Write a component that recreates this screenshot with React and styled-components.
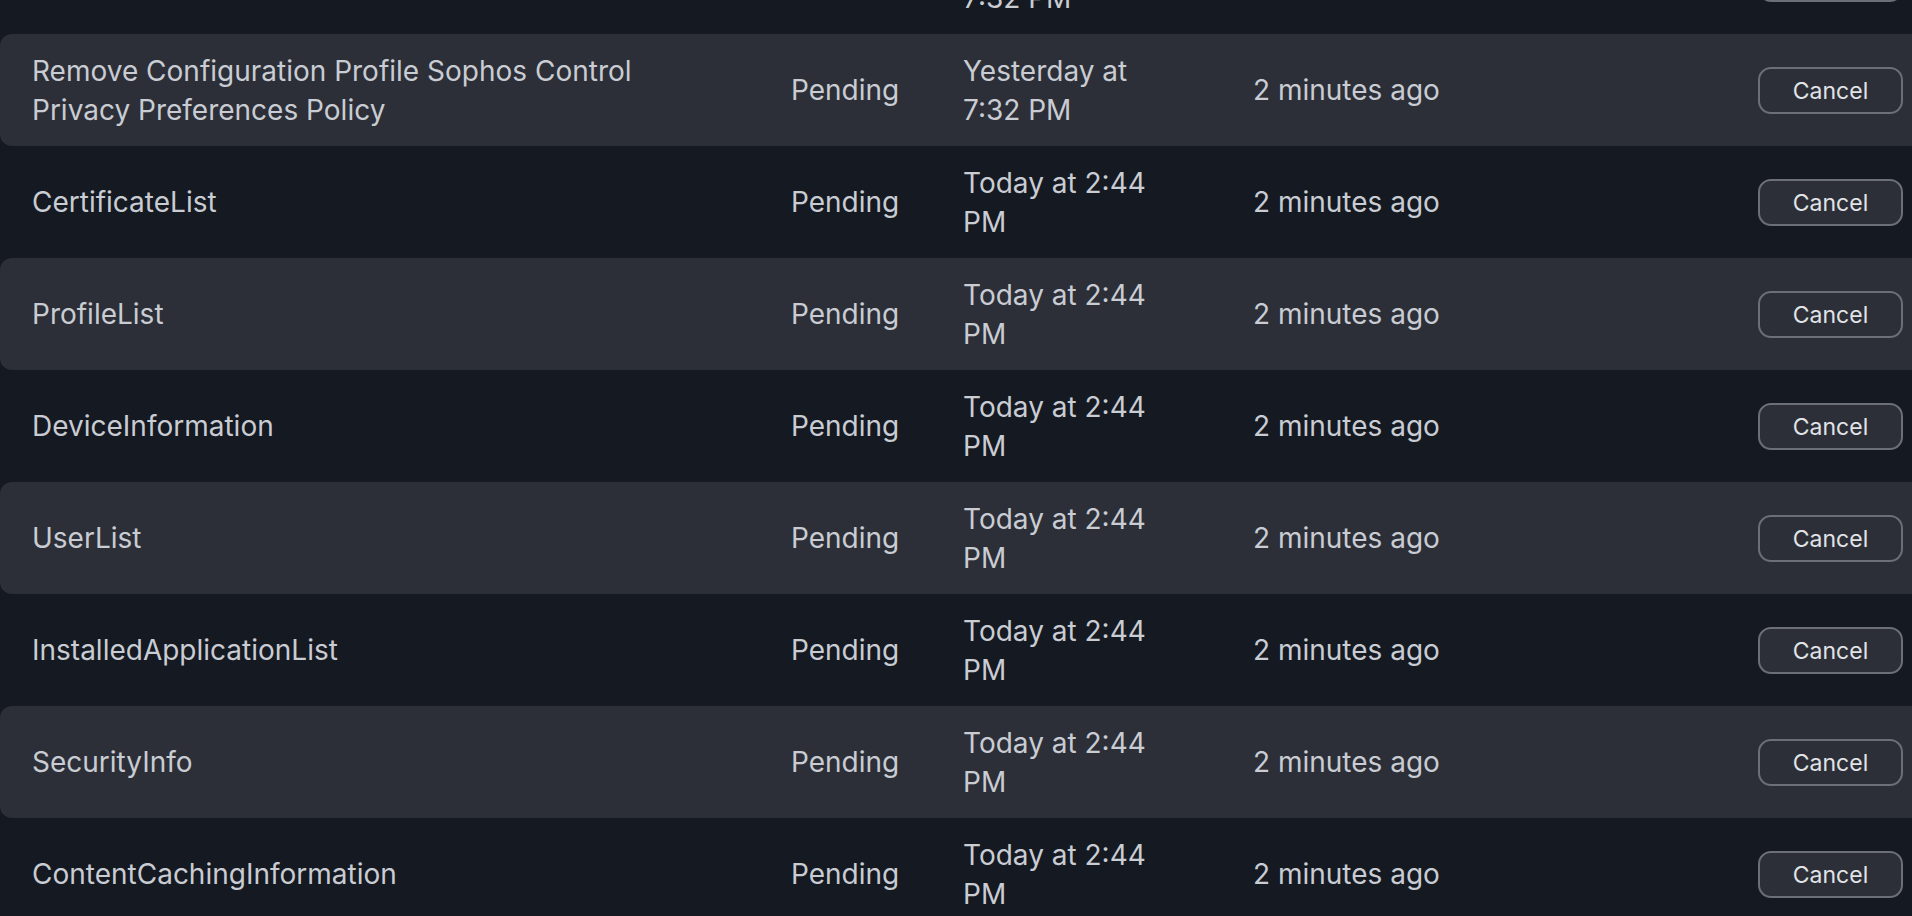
import React from 'react';
import styled, { createGlobalStyle } from 'styled-components';

const GlobalStyle = createGlobalStyle`
  html, body {
    margin: 0;
    padding: 0;
    background: #151922;
    overflow: hidden;
  }
  body {
    font-family: Inter, "Noto Sans", "Liberation Sans", sans-serif;
    -webkit-font-smoothing: antialiased;
  }
`;

const commands = [
  { name: 'Install Configuration Profile', date: 'Yesterday at 7:32 PM' },
  { name: 'Remove Configuration Profile Sophos Control Privacy Preferences Policy', date: 'Yesterday at 7:32 PM' },
  { name: 'CertificateList', date: 'Today at 2:44 PM' },
  { name: 'ProfileList', date: 'Today at 2:44 PM' },
  { name: 'DeviceInformation', date: 'Today at 2:44 PM' },
  { name: 'UserList', date: 'Today at 2:44 PM' },
  { name: 'InstalledApplicationList', date: 'Today at 2:44 PM' },
  { name: 'SecurityInfo', date: 'Today at 2:44 PM' },
  { name: 'ContentCachingInformation', date: 'Today at 2:44 PM' },
];

export default function App() {
  return (
    <>
      <GlobalStyle />
      <List>
        {commands.map((cmd, i) => (
          <Row key={i} $striped={i % 2 === 1}>
            <NameCell>{cmd.name}</NameCell>
            <Cell>Pending</Cell>
            <DateCell>{cmd.date}</DateCell>
            <Cell>2 minutes ago</Cell>
            <CancelButton>Cancel</CancelButton>
          </Row>
        ))}
      </List>
    </>
  );
}

const List = styled.div`
  display: flex;
  flex-direction: column;
  width: calc(100% + 14px);
  margin-top: -78px;
`;

const Row = styled.div`
  display: grid;
  grid-template-columns: 759px 172px 290px 1fr auto;
  align-items: center;
  height: 112px;
  box-sizing: border-box;
  padding: 1px 23px 0 32px;
  border-radius: 12px;
  background: ${p => (p.$striped ? '#2c2f38' : 'transparent')};
  color: #c9ccd2;
  font-size: 28px;
  line-height: 39px;
`;

const Cell = styled.div`
  white-space: nowrap;
`;

const NameCell = styled.div`
  max-width: 650px;
`;

const DateCell = styled.div`
  max-width: 205px;
`;

const CancelButton = styled.button`
  width: 145px;
  height: 47px;
  box-sizing: border-box;
  border: 2px solid #6c6f77;
  border-radius: 13px;
  background: #2c2f38;
  color: #e1e3e7;
  font-family: Inter, "Noto Sans", "Liberation Sans", sans-serif;
  font-size: 23px;
  cursor: pointer;
  padding: 0;
`;
